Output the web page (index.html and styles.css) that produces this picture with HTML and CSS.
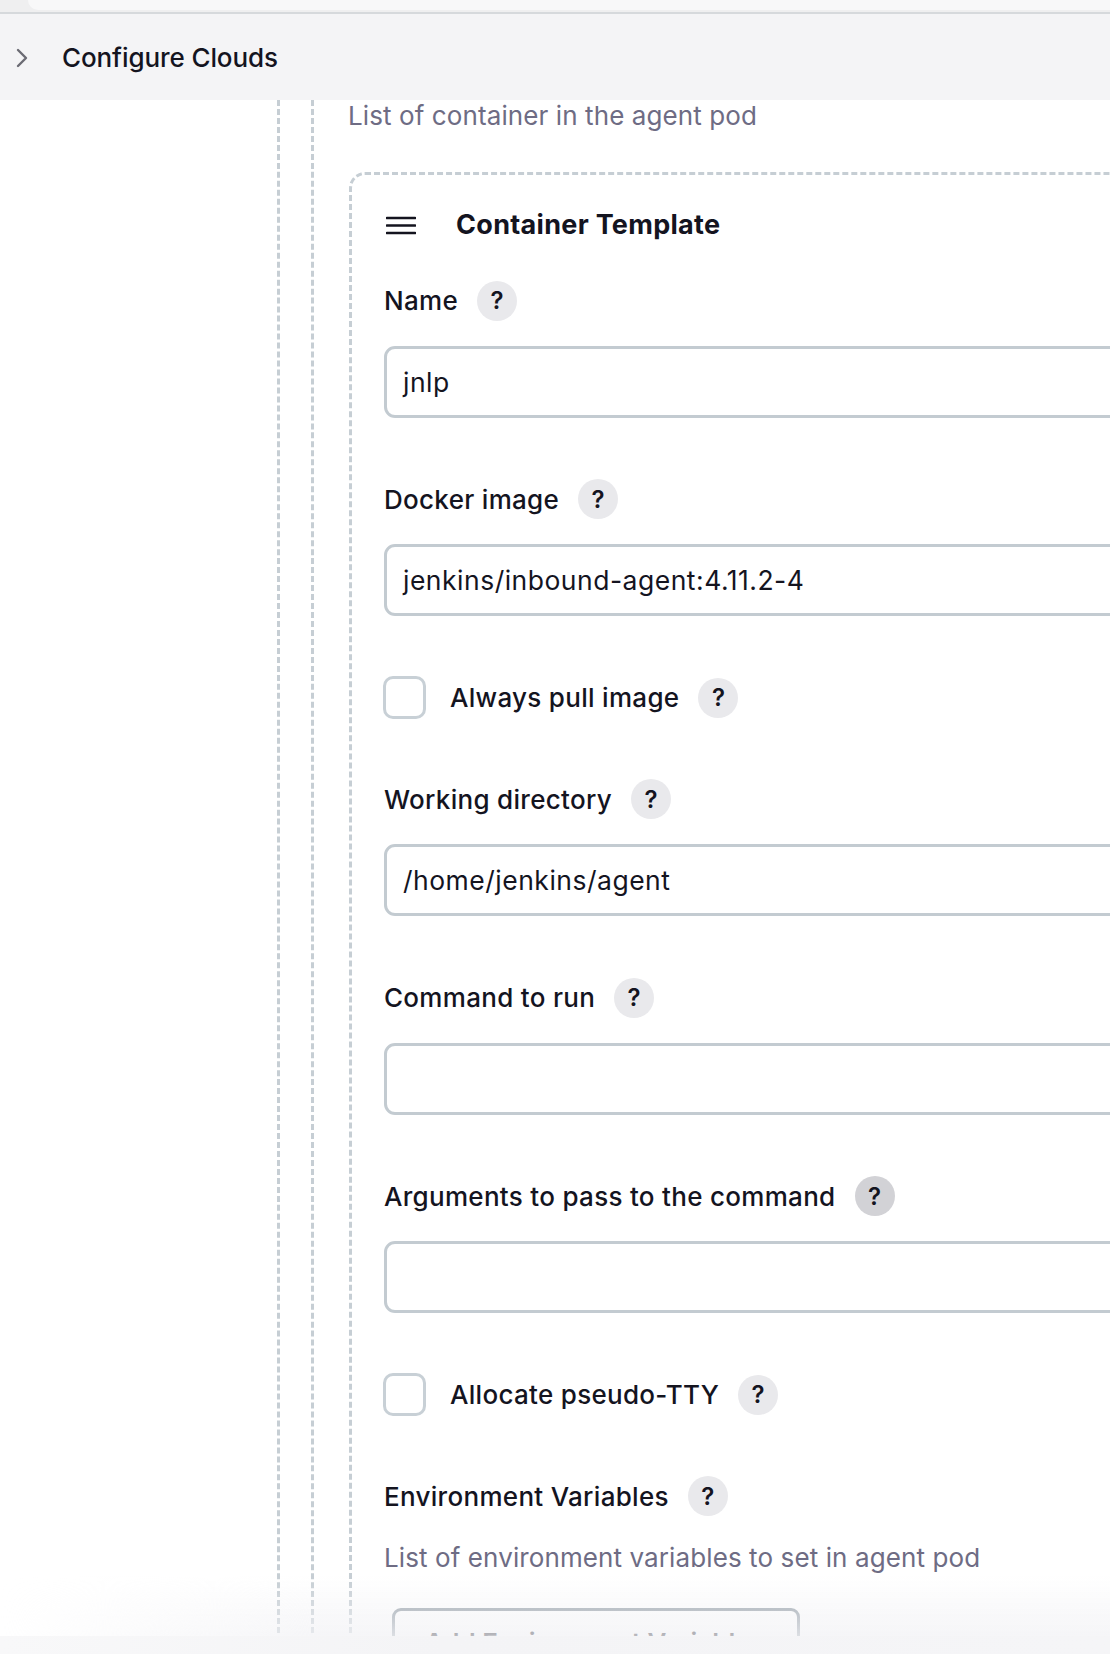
FILE: index.html
```html
<!DOCTYPE html>
<html lang="en">
<head>
<meta charset="utf-8">
<title>Configure Clouds</title>
<link rel="stylesheet" href="styles.css">
</head>
<body>
<div class="topstrip"><div class="topstrip-inner"></div></div>
<nav class="breadcrumb">
  <svg class="chev" width="14" height="20" viewBox="0 0 14 20"><path d="M3 2 L11 10 L3 18" fill="none" stroke="#6b6b74" stroke-width="2.4" stroke-linecap="round" stroke-linejoin="round"/></svg>
  <span class="crumb">Configure Clouds</span>
</nav>
<main class="content">
  <div class="chunk outer">
    <div class="chunk inner">
      <div class="desc">List of container in the agent pod</div>
      <section class="tpl">
        <div class="tpl-head">
          <svg class="handle" width="30" height="20" viewBox="0 0 30 20"><path d="M1 3 H29 M1 10.5 H29 M1 18 H29" stroke="#14141f" stroke-width="2.6" stroke-linecap="round"/></svg>
          <span class="tpl-title">Container Template</span>
        </div>

        <div class="field">
          <div class="label-row"><span class="label">Name</span><span class="help">?</span></div>
          <div class="input">jnlp</div>
        </div>

        <div class="field">
          <div class="label-row"><span class="label">Docker image</span><span class="help">?</span></div>
          <div class="input">jenkins/inbound-agent:4.11.2-4</div>
        </div>

        <div class="field">
          <div class="label-row"><span class="checkbox"></span><span class="label cb-label">Always pull image</span><span class="help">?</span></div>
        </div>

        <div class="field">
          <div class="label-row"><span class="label">Working directory</span><span class="help">?</span></div>
          <div class="input">/home/jenkins/agent</div>
        </div>

        <div class="field">
          <div class="label-row"><span class="label">Command to run</span><span class="help">?</span></div>
          <div class="input"></div>
        </div>

        <div class="field">
          <div class="label-row"><span class="label">Arguments to pass to the command</span><span class="help help-hover">?</span></div>
          <div class="input"></div>
        </div>

        <div class="field">
          <div class="label-row"><span class="checkbox"></span><span class="label cb-label">Allocate pseudo-TTY</span><span class="help">?</span></div>
        </div>

        <div class="field last">
          <div class="label-row"><span class="label">Environment Variables</span><span class="help">?</span></div>
          <div class="desc env-desc">List of environment variables to set in agent pod</div>
          <button class="add-btn" type="button">Add Environment Variable <span class="caret">&#9662;</span></button>
        </div>
      </section>
    </div>
  </div>
</main>
<div class="bottom-fade"></div>
<div class="bottom-bar"></div>
</body>
</html>
```

FILE: styles.css
```css
html, body {
  margin: 0;
  padding: 0;
}
body {
  width: 1110px;
  height: 1654px;
  overflow: hidden;
  background: #ffffff;
  font-family: Inter, "Noto Sans", "Liberation Sans", sans-serif;
  color: #14141f;
  position: relative;
}

.topstrip {
  height: 12px;
  background: #efeff0;
  border-bottom: 2px solid #d6d9dc;
}
.topstrip-inner {
  height: 10px;
  margin-left: 28px;
  background: #f8f8f9;
  border-bottom-left-radius: 10px;
}

.breadcrumb {
  height: 86px;
  background: #f4f4f6;
  display: flex;
  align-items: center;
}
.chev {
  margin-left: 15px;
  margin-right: 33px;
  margin-top: 1px;
}
.crumb {
  font-size: 26px;
  font-weight: 500;
  letter-spacing: -0.1px;
}

.content {
  height: 1560px;
}
.chunk {
  border-left: 3px dashed #c6ced4;
  height: 100%;
  box-sizing: border-box;
}
.outer {
  margin-left: 277px;
  padding-left: 31px;
}
.inner {
  padding-left: 35px;
}

.desc {
  font-size: 26px;
  line-height: 32px;
  color: #6e6c84;
  margin-left: -1px;
  letter-spacing: 0.1px;
}

.tpl {
  margin-top: 40px;
  margin-right: -60px;
  border-top: 3.5px dashed #c6ced4;
  border-left: 3.5px dashed #c6ced4;
  border-top-left-radius: 16px;
  padding: 31.5px 0 0 32px;
  height: 1500px;
}

.tpl-head {
  display: flex;
  align-items: center;
  height: 36px;
  margin-bottom: 38px;
}
.handle {
  margin-left: 2px;
  margin-right: 40px;
}
.tpl-title {
  font-size: 27px;
  font-weight: 700;
  letter-spacing: 0.3px;
}

.field {
  margin-bottom: 61.5px;
}
.label-row {
  display: flex;
  align-items: center;
  height: 40px;
}
.label {
  font-size: 26px;
  font-weight: 500;
  letter-spacing: 0.3px;
}
.help {
  width: 40px;
  height: 40px;
  border-radius: 50%;
  background: #e9e9ec;
  margin-left: 19px;
  display: flex;
  align-items: center;
  justify-content: center;
  font-size: 24px;
  font-weight: 600;
  color: #14141f;
}
.help-hover {
  background: #d2d2d6;
}

.input {
  margin-top: 25px;
  height: 72px;
  box-sizing: border-box;
  border: 3.5px solid #c3cbd1;
  border-radius: 11px;
  padding: 0 16px;
  display: flex;
  align-items: center;
  font-size: 26.5px;
  letter-spacing: 0.5px;
  color: #14141f;
}

.checkbox {
  width: 43px;
  height: 43px;
  box-sizing: border-box;
  border: 3.5px solid #c8d0d6;
  border-radius: 10px;
  margin: -2px 0 -1px -1px;
  flex: none;
}
.cb-label {
  margin-left: 24px;
}

.env-desc {
  margin-top: 25.5px;
  margin-left: 0;
}
.add-btn {
  margin-top: 34px;
  margin-left: 8px;
  width: 408px;
  height: 70px;
  border: 3.5px solid #97a1aa;
  border-radius: 9px;
  background: #ffffff;
  font-family: Inter, "Noto Sans", "Liberation Sans", sans-serif;
  font-size: 26px;
  font-weight: 600;
  color: #14141f;
}
.caret {
  font-size: 20px;
}

.bottom-fade {
  position: absolute;
  left: 0;
  right: 0;
  bottom: 18px;
  height: 60px;
  background: linear-gradient(to bottom, rgba(244,244,247,0) 0%, rgba(242,242,245,0.75) 100%);
  -webkit-mask-image: linear-gradient(to right, transparent 0px, #000 320px);
  mask-image: linear-gradient(to right, transparent 0px, #000 320px);
}
.bottom-bar {
  position: absolute;
  left: 0;
  right: 0;
  bottom: 0;
  height: 18px;
  background: linear-gradient(to right, #f8f8f9 0%, #f4f4f6 40%, #f5f5f7 100%);
}
```
